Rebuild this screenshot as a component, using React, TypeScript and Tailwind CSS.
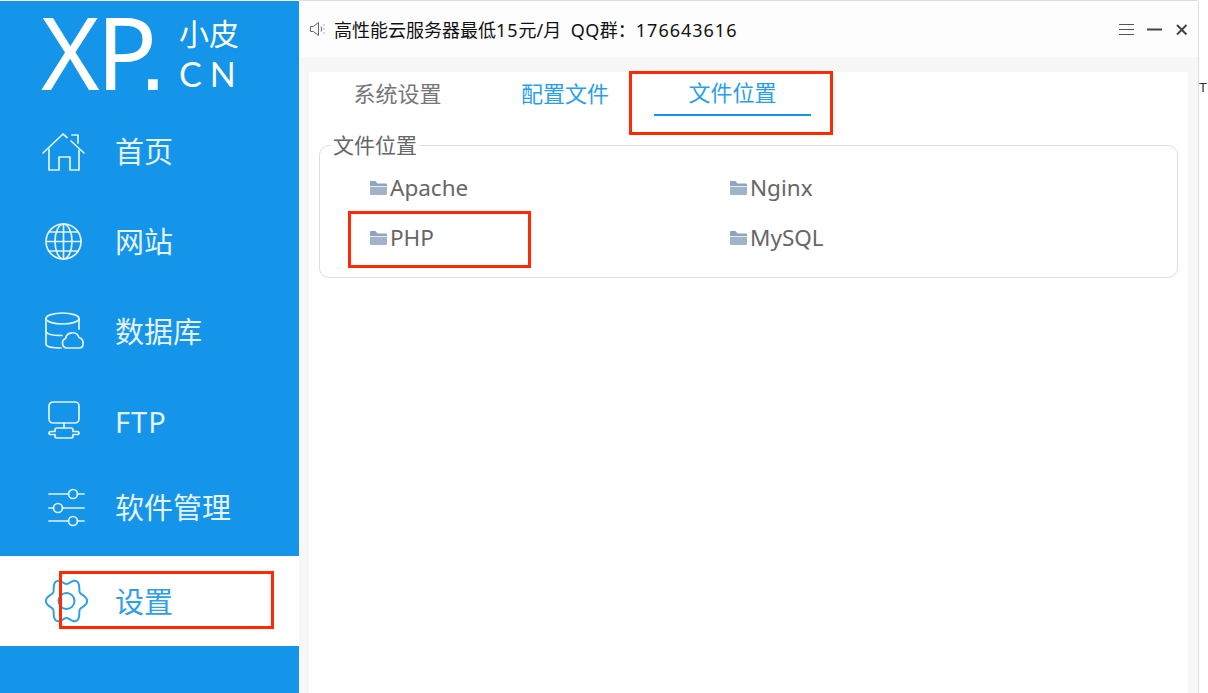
import { ReactNode } from "react";

const CJK = "font-['Noto_Sans','Noto_Sans_CJK_SC',sans-serif]";

function NavIcon({ children, className }: { children: ReactNode; className?: string }) {
  return (
    <svg
      width="48"
      height="48"
      viewBox="0 0 48 48"
      fill="none"
      stroke="currentColor"
      strokeWidth="1.7"
      strokeLinecap="round"
      strokeLinejoin="round"
      className={className}
    >
      {children}
    </svg>
  );
}

function HomeIcon() {
  return (
    <NavIcon>
      <path d="M2 26 22 7l4 3.500M30 14l13 12" />
      <path d="M31 8h6v8" />
      <path d="M8 22v21h10V30h11v13h9V23" />
    </NavIcon>
  );
}

function GlobeIcon() {
  return (
    <NavIcon>
      <circle cx="22.500" cy="24.500" r="17.500" />
      <ellipse cx="22.500" cy="24.500" rx="8.500" ry="17.500" />
      <path d="M22.500 7v35M5 24.500h35M8 15h29M8 34h29" />
    </NavIcon>
  );
}

function DatabaseIcon() {
  return (
    <NavIcon>
      <ellipse cx="21.500" cy="11.500" rx="16.500" ry="5.500" />
      <path d="M5 11.500V37c0 2.500 6 4 15 4" />
      <path d="M38 11.500V22" />
      <path d="M5 24c0 3 7 4.500 16 4.500" />
      <path d="M25.500 41a5 5 0 0 1-1-9.500 7 7 0 0 1 13.500-1 5.500 5.500 0 0 1 4 6.500c0 2.500-1.500 4-4 4z" />
    </NavIcon>
  );
}

function FtpIcon() {
  return (
    <NavIcon>
      <rect x="8" y="5" width="30" height="21" rx="4" />
      <path d="M23 26v5" />
      <path d="M14 34.500V33q0-2 2-2h14q2 0 2 2v1.500h4q2 0 2 1.500t-2 1.500h-4V39q0 2-2 2H16q-2 0-2-2v-1.500h-4Q8 37.500 8 36t2-1.500z" />
    </NavIcon>
  );
}

function SlidersIcon() {
  return (
    <NavIcon>
      <path d="M8 11h19.500M36.500 11H43" />
      <circle cx="32" cy="11" r="4.500" />
      <path d="M8 25h4.500M21.500 25H43" />
      <circle cx="17" cy="25" r="4.500" />
      <path d="M8 38h19.500M36.500 38H43" />
      <circle cx="32" cy="38" r="4.500" />
    </NavIcon>
  );
}

// six soft lobes round the centre
const gearPath =
  Array.from({ length: 96 }, (_, i) => {
    const a = (i / 96) * Math.PI * 2;
    const r = 18 + 2.6 * Math.cos(6 * a);
    const x = 25.5 + r * Math.cos(a);
    const y = 24 + r * 1.1 * Math.sin(a);
    return `${i === 0 ? "M" : "L"}${x.toFixed(2)} ${y.toFixed(2)}`;
  }).join("") + "z";

function GearIcon() {
  return (
    <NavIcon className="text-[#2f9fe6]">
      <path d={gearPath} strokeWidth="2" />
      <circle cx="25.500" cy="24" r="8" strokeWidth="2" />
    </NavIcon>
  );
}

const navItems = [
  { label: "首页", icon: <HomeIcon /> },
  { label: "网站", icon: <GlobeIcon /> },
  { label: "数据库", icon: <DatabaseIcon /> },
  { label: "FTP", icon: <FtpIcon /> },
  { label: "软件管理", icon: <SlidersIcon />, lift: true },
  { label: "设置", icon: <GearIcon />, active: true },
];

function FolderIcon() {
  return (
    <svg width="17" height="14" viewBox="0 0 17 14" className="shrink-0">
      <path d="M0 1Q0 0 1 0h4.500L7.500 2.500H16q1 0 1 1V5H0z" fill="#8fa5bf" />
      <path d="M0 5.800h17V13q0 1-1 1H1q-1 0-1-1z" fill="#a0b3cb" />
    </svg>
  );
}

function FileLink({ label }: { label: string }) {
  return (
    <div className="flex items-center h-[50px] pl-[50px] gap-[3px]">
      <FolderIcon />
      <span className="text-[22.500px] text-[#666]">{label}</span>
    </div>
  );
}

function Annotation({ className }: { className: string }) {
  return <div className={`absolute border-[3px] border-[#ff2a00] ${className}`} />;
}

export default function App() {
  return (
    <div className={`relative w-full h-screen flex overflow-hidden bg-white ${CJK}`}>
      {/* sidebar */}
      <aside className="w-[299px] mt-px shrink-0 bg-[#1495e9] text-[#e4f2fc] flex flex-col">
        <div className="h-[105px] flex pl-[41px] text-white">
          <div className="text-[100px] leading-[100px] h-[100px] w-[121px] whitespace-nowrap">
            <span className="tracking-[-3px]">X</span>
            <span className="tracking-[-18px]">P</span>
            <span className="font-['Liberation_Sans',sans-serif]">.</span>
          </div>
          <div className="ml-[17px] mt-[13px] flex flex-col">
            <span className="text-[30px] leading-[40px]">小皮</span>
            <span className="text-[34px] leading-[40px] tracking-[8px] font-['Lato',sans-serif]">CN</span>
          </div>
        </div>
        {navItems.map((item) => (
          <div
            key={item.label}
            className={`h-[90px] shrink-0 flex items-center gap-[26px] pl-[41px] ${
              item.active ? "bg-white text-[#2f9fe6]" : ""
            } ${item.lift ? "pb-[8px]" : ""}`}
          >
            {item.icon}
            <span className={`text-[29px] leading-none ${item.label === "FTP" ? "tracking-[1px]" : ""}`}>
              {item.label}
            </span>
          </div>
        ))}
      </aside>

      {/* window */}
      <main className="w-[900px] shrink-0 flex flex-col border-t border-r border-[#dcdcdc] rounded-tr-[3px] bg-[#f7f7f7]">
        <header className="h-[56px] shrink-0 bg-[#fdfdfd] flex items-center pl-[10px] pr-[10px]">
          <svg width="18" height="18" viewBox="0 0 18 18" fill="none" stroke="#666" strokeWidth="1" className="mr-[7px]">
            <path d="M1.500 6.500h3L9.500 2.500v13l-5-4h-3z" />
            <path d="M12 6.500q1.500 2.500 0 5M15 4.500v1M15 8.500v1M15 12.500v1" />
          </svg>
          <span className="text-[18px] text-[#111] whitespace-pre pt-[2px]">
            高性能云服务器最低<span className="tracking-[1px]">15</span>元/月{"  "}<span className="tracking-[0.5px]">QQ</span>群：<span className="tracking-[1px]">176643616</span>
          </span>
          <div className="ml-auto flex items-center gap-[13px] text-[#444]">
            <svg width="15" height="13" viewBox="0 0 15 13" stroke="#555" strokeWidth="1">
              <path d="M0 1.500h15M0 6.500h15M0 11.500h15" />
            </svg>
            <svg width="15" height="13" viewBox="0 0 15 13" stroke="#444" strokeWidth="2">
              <path d="M0 6.500h15" />
            </svg>
            <svg width="13" height="13" viewBox="0 0 13 13" stroke="#444" strokeWidth="2">
              <path d="M2 2l9.500 9.500M11.500 2 2 11.500" />
            </svg>
          </div>
        </header>

        <section className="mt-[15px] mx-[10px] flex-1 bg-white px-[10px]">
          <div className="flex gap-[10.500px] h-[44px] text-[22px]">
            <div className="w-[157px] h-full flex items-center justify-center pb-[2px] text-[#777]">系统设置</div>
            <div className="w-[157px] h-full flex items-center justify-center pb-[2px] text-[#2a9eea]">配置文件</div>
            <div className="w-[157px] h-full flex items-center justify-center pb-[2px] text-[#2a9eea] border-b-2 border-[#1495e9]">
              文件位置
            </div>
          </div>
          <fieldset className="mt-[15px] h-[147px] border border-[#dedede] rounded-[10px]">
            <legend className="ml-[11px] px-[2px] text-[21px] leading-[28px] text-[#666]">文件位置</legend>
            <div className="grid grid-cols-[360px_1fr] mt-[4px]">
              <FileLink label="Apache" />
              <FileLink label="Nginx" />
              <FileLink label="PHP" />
              <FileLink label="MySQL" />
            </div>
          </fieldset>
        </section>
      </main>

      {/* sliver of the page behind the window */}
      <div className="flex-1 overflow-hidden pt-[80px] text-[13px] leading-[16px] text-[#333] font-['Liberation_Sans',sans-serif]">T</div>

      {/* red markers over the screenshot */}
      <Annotation className="left-[629px] top-[71px] w-[204px] h-[64px]" />
      <Annotation className="left-[348px] top-[211px] w-[183px] h-[57px]" />
      <Annotation className="left-[59px] top-[571px] w-[215px] h-[58px]" />
    </div>
  );
}
